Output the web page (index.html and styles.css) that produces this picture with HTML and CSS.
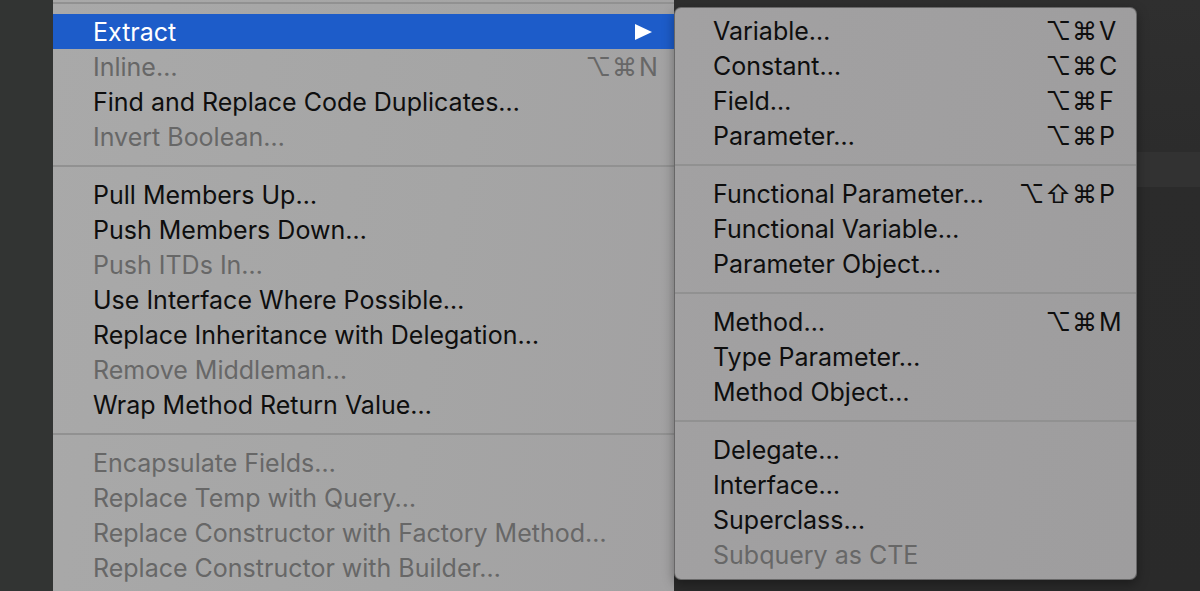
FILE: index.html
```html
<!DOCTYPE html>
<html>
<head>
<meta charset="utf-8">
<link rel="stylesheet" href="styles.css">
</head>
<body>
<div class="screen">
  <div class="strip"></div>
  <div class="menu">
    <div class="sep sep-top"></div>
    <div class="item active"><span class="label">Extract</span><span class="arrow"></span></div>
    <div class="item disabled"><span class="label">Inline…</span><span class="sc"><span class="mods">⌥⌘</span><span class="key">N</span></span></div>
    <div class="item"><span class="label">Find and Replace Code Duplicates…</span></div>
    <div class="item disabled"><span class="label">Invert Boolean…</span></div>
    <div class="sep"></div>
    <div class="item"><span class="label">Pull Members Up…</span></div>
    <div class="item"><span class="label">Push Members Down…</span></div>
    <div class="item disabled"><span class="label">Push ITDs In…</span></div>
    <div class="item"><span class="label">Use Interface Where Possible…</span></div>
    <div class="item"><span class="label">Replace Inheritance with Delegation…</span></div>
    <div class="item disabled"><span class="label">Remove Middleman…</span></div>
    <div class="item"><span class="label">Wrap Method Return Value…</span></div>
    <div class="sep"></div>
    <div class="item disabled"><span class="label">Encapsulate Fields…</span></div>
    <div class="item disabled"><span class="label">Replace Temp with Query…</span></div>
    <div class="item disabled"><span class="label">Replace Constructor with Factory Method…</span></div>
    <div class="item disabled"><span class="label">Replace Constructor with Builder…</span></div>
  </div>
  <div class="backdrop">
    <div class="submenu">
      <div class="item"><span class="label">Variable…</span><span class="sc"><span class="mods">⌥⌘</span><span class="key">V</span></span></div>
      <div class="item"><span class="label">Constant…</span><span class="sc"><span class="mods">⌥⌘</span><span class="key">C</span></span></div>
      <div class="item"><span class="label">Field…</span><span class="sc"><span class="mods">⌥⌘</span><span class="key">F</span></span></div>
      <div class="item"><span class="label">Parameter…</span><span class="sc"><span class="mods">⌥⌘</span><span class="key">P</span></span></div>
      <div class="sep"></div>
      <div class="item"><span class="label">Functional Parameter…</span><span class="sc"><span class="mods">⌥⇧⌘</span><span class="key">P</span></span></div>
      <div class="item"><span class="label">Functional Variable…</span></div>
      <div class="item"><span class="label">Parameter Object…</span></div>
      <div class="sep"></div>
      <div class="item"><span class="label">Method…</span><span class="sc"><span class="mods">⌥⌘</span><span class="key">M</span></span></div>
      <div class="item"><span class="label">Type Parameter…</span></div>
      <div class="item"><span class="label">Method Object…</span></div>
      <div class="sep"></div>
      <div class="item"><span class="label">Delegate…</span></div>
      <div class="item"><span class="label">Interface…</span></div>
      <div class="item"><span class="label">Superclass…</span></div>
      <div class="item disabled"><span class="label">Subquery as CTE</span></div>
    </div>
  </div>
</div>
</body>
</html>
```

FILE: styles.css
```css
html, body {
  margin: 0;
  padding: 0;
  background: #2b2b2b;
}

.screen {
  display: flex;
  width: 1200px;
  height: 591px;
  overflow: hidden;
  font-family: "Inter", "DejaVu Sans", sans-serif;
  font-size: 25px;
  color: #0e0e0e;
}

.strip {
  width: 53px;
  flex: none;
  background: #323433;
}

.menu {
  width: 621px;
  flex: none;
  background: linear-gradient(100deg, #a9a9a9 0%, #a5a5a5 60%, #a2a1a2 100%);
}

.item {
  height: 35px;
  display: flex;
  align-items: center;
  padding: 0 13px 0 40px;
  white-space: nowrap;
}

.label {
  flex: 1;
}

.disabled {
  color: #676767;
}

.active {
  background: #1d5cc9;
  color: #ffffff;
}

.arrow {
  width: 0;
  height: 0;
  border-top: 8px solid transparent;
  border-bottom: 8px solid transparent;
  border-left: 17px solid #ffffff;
  margin-right: 9px;
}

.sc {
  display: flex;
  align-items: center;
}

.mods {
  font-family: "Inter", "DejaVu Sans", sans-serif;
  font-size: 25px;
  letter-spacing: 1px;
}

.key {
  width: 22px;
  padding-left: 1px;
}

.sep {
  height: 23px;
  display: flex;
  align-items: center;
}

.sep::before {
  content: "";
  flex: 1;
  height: 2px;
  background: #919191;
}

.sep-top {
  margin-top: -9px;
}

.backdrop {
  flex: 1;
  background: linear-gradient(to bottom, #2f2f2f 0, #2c2c2c 152px, #323232 152px, #323232 187px, #2b2b2b 187px, #2a2a2a 100%);
}

.submenu {
  margin-top: 7px;
  width: 461px;
  height: 560px;
  padding: 5px 0 6px;
  border: 1px solid rgba(0, 0, 0, 0.35);
  border-radius: 7px;
  background: linear-gradient(100deg, #a2a1a2 0%, #9e9d9e 100%);
  box-shadow: 0 4px 12px rgba(0, 0, 0, 0.35);
}

.submenu .item {
  padding: 0 13px 0 38px;
}

.submenu .key {
  width: 24px;
}
```
